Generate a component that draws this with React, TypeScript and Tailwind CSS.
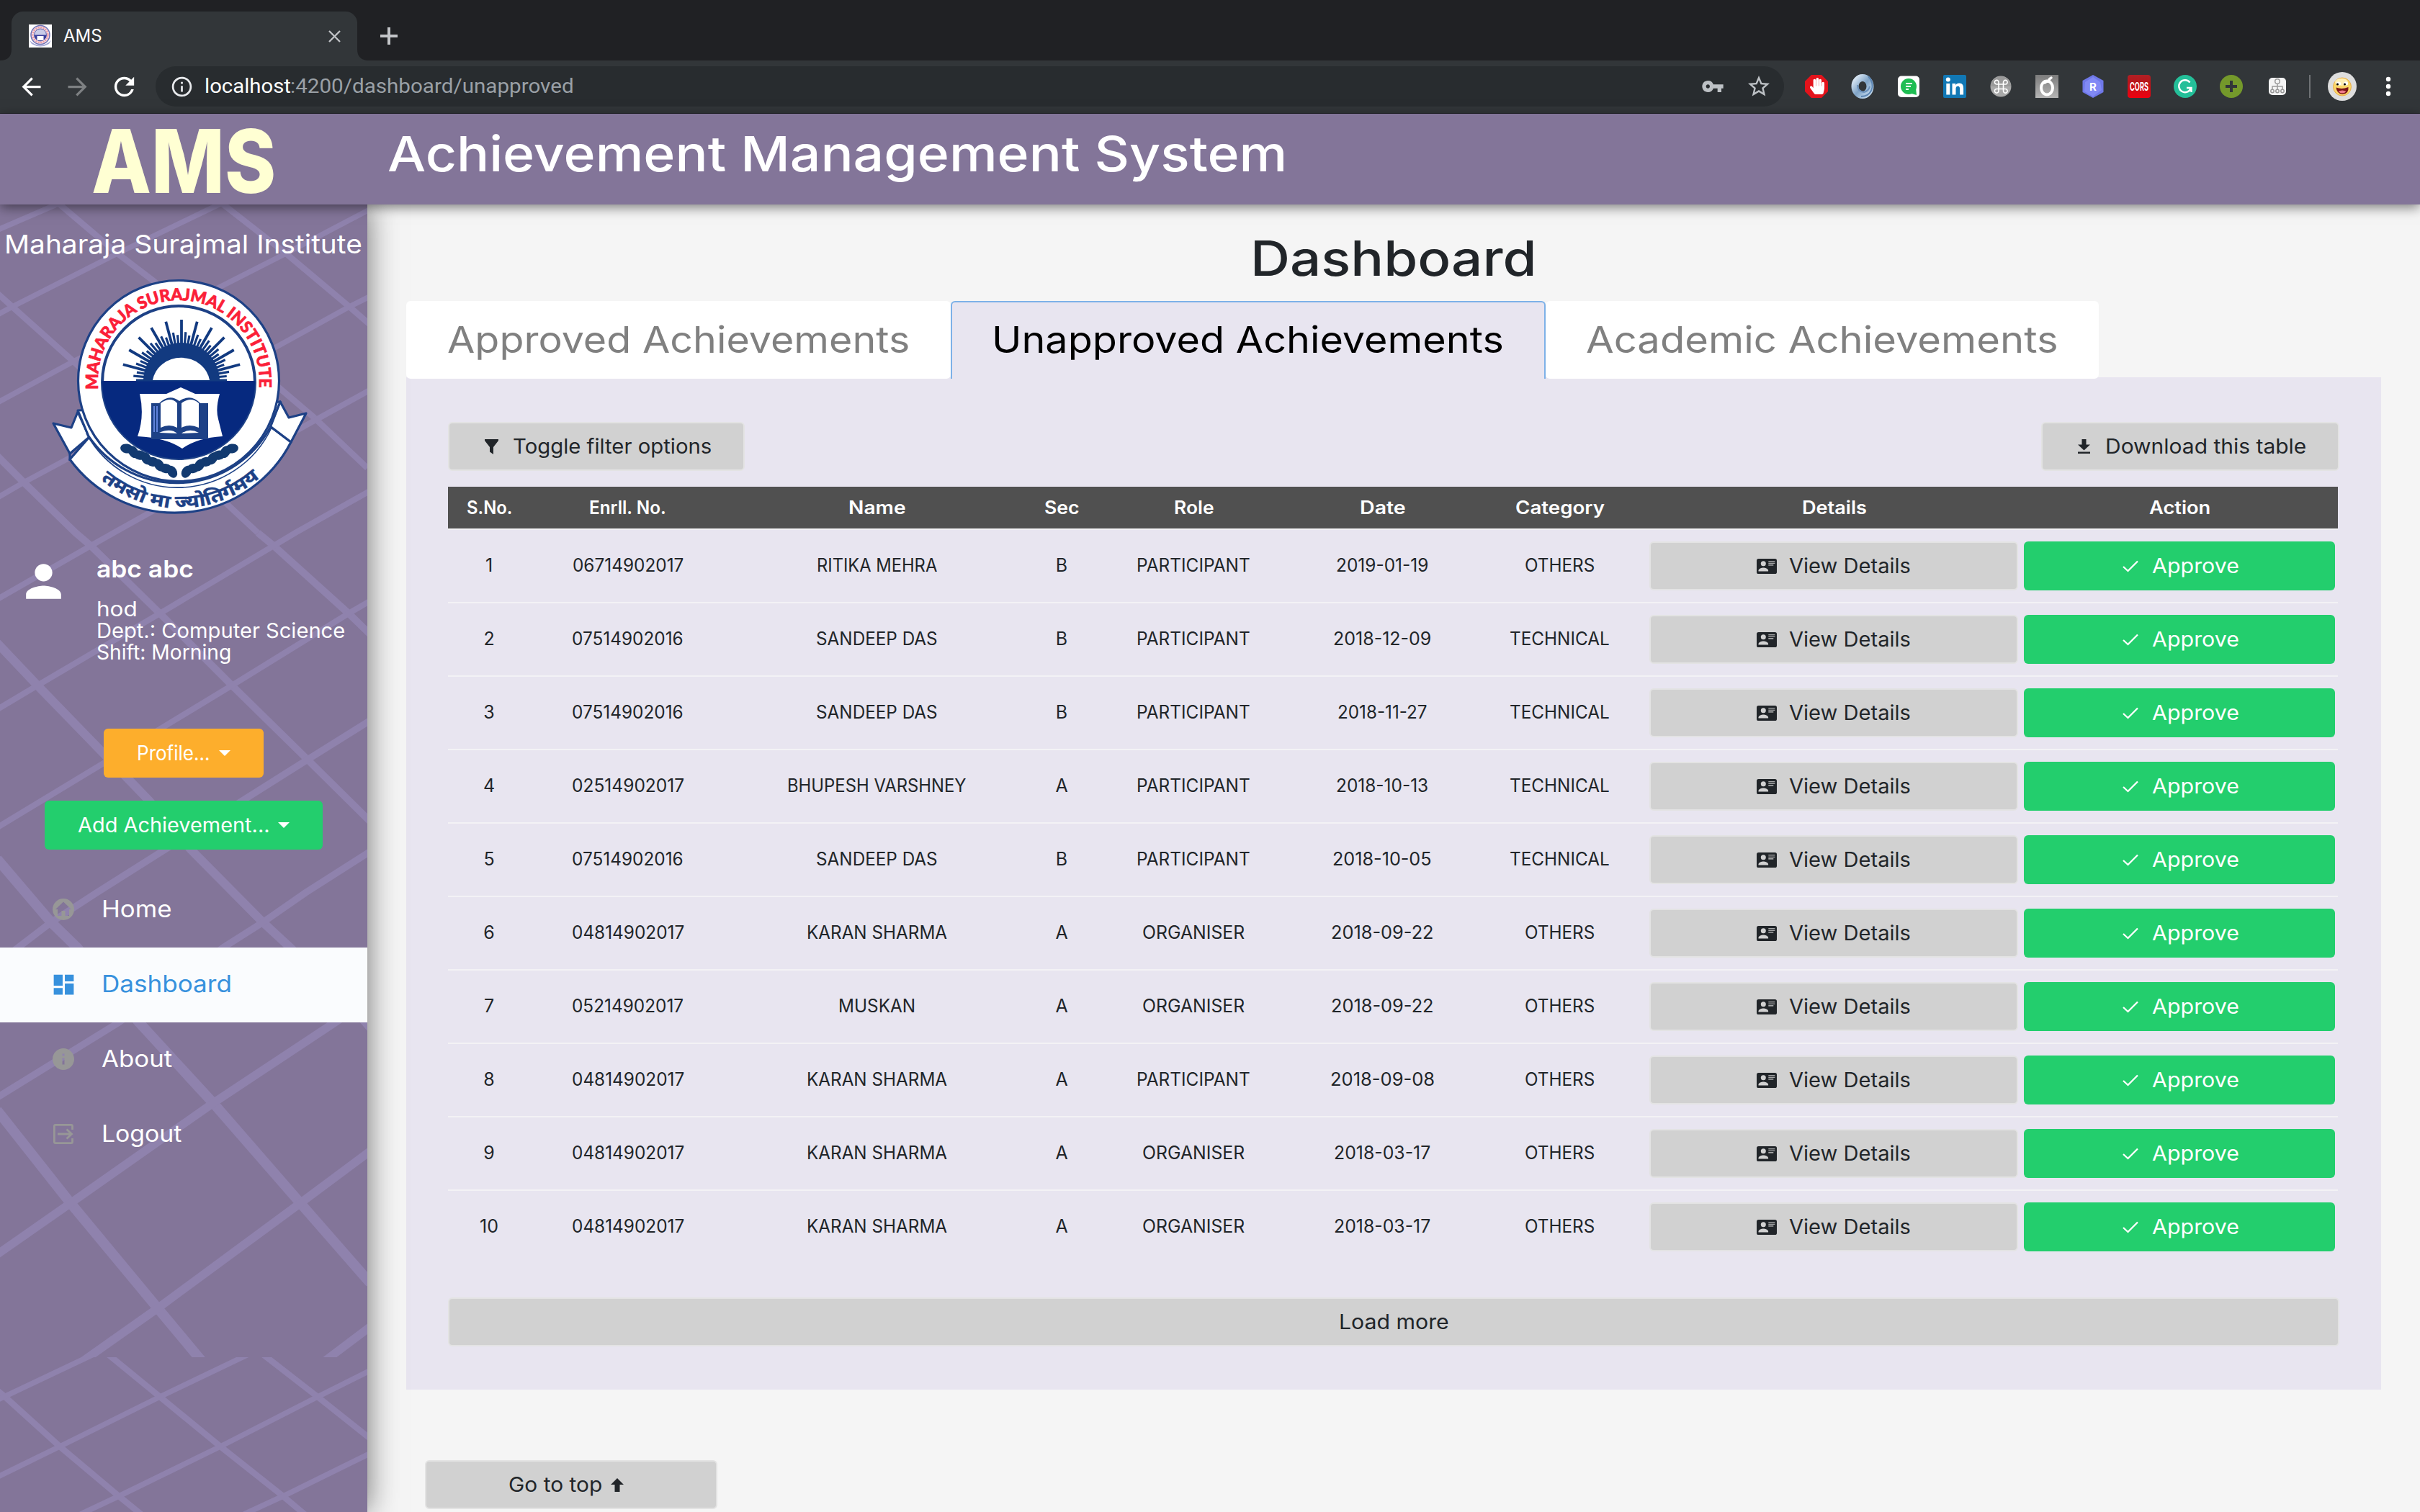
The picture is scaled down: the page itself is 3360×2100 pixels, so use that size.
import { useLayoutEffect, useRef, useState } from "react";
import type { ReactNode } from "react";
import { MdArrowBack, MdArrowForward, MdDashboard, MdInfo, MdOutlineInfo, MdPerson, MdRefresh, MdStarBorder, MdVpnKey } from "react-icons/md";
import { FaHandPaper } from "react-icons/fa";

/* Text widened or narrowed so that its letters span `w` pixels. */
function Fit({ w, children, className = "" }: { w: number; children: string; className?: string }) {
  const ref = useRef<HTMLSpanElement>(null);
  const [box, setBox] = useState({ width: w, scale: 1 });
  useLayoutEffect(() => {
    const el = ref.current;
    if (!el) return;
    const size = parseFloat(getComputedStyle(el).fontSize);
    const width = w + size * 0.12;
    setBox({ width, scale: width / el.offsetWidth });
  }, [w, children]);
  return (
    <span className={"inline-block whitespace-pre " + className} style={{ width: box.width }}>
      <span ref={ref} className="inline-block origin-left" style={{ transform: `scaleX(${box.scale})` }}>
        {children}
      </span>
    </span>
  );
}

const rows: { n: string; enr: string; ew: number; name: string; nw: number; sec: string; role: string; date: string; dw: number; cat: string }[] = [
  { n: "1", enr: "06714902017", ew: 151, name: "RITIKA MEHRA", nw: 164, sec: "B", role: "PARTICIPANT", date: "2019-01-19", dw: 125, cat: "OTHERS" },
  { n: "2", enr: "07514902016", ew: 152, name: "SANDEEP DAS", nw: 166, sec: "B", role: "PARTICIPANT", date: "2018-12-09", dw: 133, cat: "TECHNICAL" },
  { n: "3", enr: "07514902016", ew: 152, name: "SANDEEP DAS", nw: 166, sec: "B", role: "PARTICIPANT", date: "2018-11-27", dw: 122, cat: "TECHNICAL" },
  { n: "4", enr: "02514902017", ew: 153, name: "BHUPESH VARSHNEY", nw: 246, sec: "A", role: "PARTICIPANT", date: "2018-10-13", dw: 125, cat: "TECHNICAL" },
  { n: "5", enr: "07514902016", ew: 152, name: "SANDEEP DAS", nw: 166, sec: "B", role: "PARTICIPANT", date: "2018-10-05", dw: 135, cat: "TECHNICAL" },
  { n: "6", enr: "04814902017", ew: 153, name: "KARAN SHARMA", nw: 192, sec: "A", role: "ORGANISER", date: "2018-09-22", dw: 140, cat: "OTHERS" },
  { n: "7", enr: "05214902017", ew: 152, name: "MUSKAN", nw: 104, sec: "A", role: "ORGANISER", date: "2018-09-22", dw: 140, cat: "OTHERS" },
  { n: "8", enr: "04814902017", ew: 153, name: "KARAN SHARMA", nw: 192, sec: "A", role: "PARTICIPANT", date: "2018-09-08", dw: 142, cat: "OTHERS" },
  { n: "9", enr: "04814902017", ew: 153, name: "KARAN SHARMA", nw: 192, sec: "A", role: "ORGANISER", date: "2018-03-17", dw: 131, cat: "OTHERS" },
  { n: "10", enr: "04814902017", ew: 153, name: "KARAN SHARMA", nw: 192, sec: "A", role: "ORGANISER", date: "2018-03-17", dw: 131, cat: "OTHERS" },
];

const headers: [string, number][] = [
  ["S.No.", 60], ["Enrll. No.", 104], ["Name", 77], ["Sec", 46], ["Role", 53], ["Date", 61], ["Category", 121], ["Details", 87], ["Action", 82],
];

const grid = "grid grid-cols-[114px_270px_422px_92px_274px_250px_242px_520px_440px]";

function GreyButton({ children, className = "" }: { children: ReactNode; className?: string }) {
  return (
    <div className={"flex h-[68px] items-center rounded-[6px] border-2 border-[#e3e3e3] bg-[#d1d1d1] text-[28px] text-[#212529] " + className}>
      {children}
    </div>
  );
}

function CardIcon() {
  return (
    <svg width="28" height="21" viewBox="0 0 28 21">
      <rect width="28" height="21" rx="2.6" fill="#212529" />
      <circle cx="9.3" cy="6.8" r="3.5" fill="#d1d1d1" />
      <path d="M2.5 17.6v-1.2c0-2.4 4.5-3.8 6.8-3.8s6.8 1.4 6.8 3.8v1.2z" fill="#d1d1d1" />
      <path d="M16.3 3.8h9M16.3 6.3h9M16.3 8.9h7" stroke="#d1d1d1" strokeWidth="1.1" />
    </svg>
  );
}

function SidebarPattern() {
  return (
    <svg className="absolute inset-0" width="510" height="1816" viewBox="0 284 510 1816" fill="none" stroke="#8f82ad">
      <path strokeWidth="8.5" d="M77 279L83 284L163 352L213 390L435 579L510 650M304 279L310 284L397 352L485 426L514 451M-4 407L17 426L102 502L358 740" />
      <path strokeWidth="7.5" d="M-5 320L83 282M-5 438L17 426L163 352L310 281M-5 560L102 502L397 352L515 290M-5 692L33 670L387 480L485 426L515 411" />
      <path strokeWidth="10" d="M-4 633L33 670L105 740L126 758L222 852L322 952L427 1055L514 1141M358 740L380 758L484 852L514 881" />
      <path strokeWidth="8" d="M-5 833L126 758L165 736L435 585L515 541M-5 986L52 952L222 852L380 758L410 740L515 681M-5 1150L152 1055L322 952L484 852L515 834" />
      <path strokeWidth="12" d="M-4 893L52 952L152 1055L207 1112L265 1180L365 1281L403 1316L499 1410L520 1434" />
      <path strokeWidth="9.5" d="M-5 1339L71 1281L134 1240L427 1055L515 1000M-5 1525L165 1420L310 1316L365 1281L424 1240L515 1182" />
      <path strokeWidth="14" d="M-4 1193L71 1281L107 1316L193 1420L296 1532L417 1671L514 1782M-4 1542L98 1671L219 1817L284 1895" />
      <path strokeWidth="11.5" d="M-5 1743L98 1671L296 1532L465 1420L515 1386M110 1894L219 1817L417 1671L515 1598M442 1897L515 1842" />
      <rect x="0" y="1885" width="510" height="215" fill="#837599" stroke="none" />
      <svg x="0" y="1885" width="510" height="215" viewBox="0 1885 510 215">
        <path strokeWidth="8.5" d="M150 1881L222 1940L306 2009L393 2078L424 2104M365 1881L441 1940L514 1998M-4 1931L7 1940L83 2009L165 2078L197 2104" />
        <path strokeWidth="7.5" d="M-5 1945L130 1881M-5 2052L83 2009L222 1940L345 1881M112 2103L165 2078L306 2009L441 1940L515 1903M339 2103L393 2078L515 2018" />
      </svg>
    </svg>
  );
}

function Emblem() {
  const rays = Array.from({ length: 37 }, (_, i) => {
    const a = Math.PI * (i / 36);
    const long = i % 3 === 0 && i > 0 && i < 36;
    const r = long ? 84 : i % 3 === 1 ? 67 : 63;
    return { x: 253 - Math.cos(a) * r, y: 526 - Math.sin(a) * r, w: long ? 3.8 : 3.2 };
  });
  const leaves = Array.from({ length: 8 }, (_, i) => i);
  return (
    <svg className="ml-[69px] mt-[22px] block" width="360" height="340" viewBox="70 384 360 340">
      <g fill="#fff" stroke="#1d4186" strokeWidth="3.2" strokeLinejoin="round">
        <path d="M98 636A181 181 0 0 0 405 612L376 590A148 148 0 0 1 125 605Z" />
        <path d="M75 586L100 592L109 570L125 605L98 628Z" />
        <path d="M426 572L402 578L390 556L376 590L405 612Z" />
        <path d="M98 626V638" />
        <path d="M109 568L124 604A148 148 0 0 0 376 592L390 556Z" />
        <circle cx="249" cy="527" r="139.5" />
        <path d="M121 600A144 144 0 0 0 378 592" fill="none" strokeWidth="1.6" />
        <circle cx="249" cy="529" r="106" strokeWidth="4" />
      </g>
      <path d="M143 527H355A106 106 0 0 1 143 531Z" fill="#06297f" />
      <g stroke="#123a80">
        {rays.map((r, i) => (
          <line key={i} x1="253" y1="526" x2={r.x} y2={r.y} strokeWidth={r.w} />
        ))}
      </g>
      <path d="M200 527A53 53 0 0 1 306 527Z" fill="#123a80" />
      <path d="M213 526A40 37 0 0 1 292 526Z" fill="#fff" />
      <path d="M195 545H232L252 536L272 545H306Q300 566 304 580L310 604Q275 606 254 621Q232 606 192 604Q202 576 195 545Z" fill="#fff" />
      <path d="M211 558H222Q236 544 250 555Q266 544 279 558H290V608H211Z" fill="#1d4186" />
      <path d="M224 558Q238 548 247 558V592Q236 586 224 592ZM253 558Q266 548 277 558V592Q264 586 253 592ZM222 599Q238 592 247 600ZM253 600Q264 592 277 599Z" fill="#fff" />
      <path d="M215 562V598M219 562V598" stroke="#7fa0ff" strokeWidth="1.4" />
      <g fill="#123a70">
        {leaves.map((i) => (
          <g key={i}>
            <ellipse cx={177 + i * 9} cy={621 + i * 4.6} rx="9" ry="6.5" transform={`rotate(${i % 2 ? 60 : 10} ${177 + i * 9} ${621 + i * 4.6})`} />
            <ellipse cx={323 - i * 9} cy={621 + i * 4.6} rx="9" ry="6.5" transform={`rotate(${i % 2 ? -60 : -10} ${323 - i * 9} ${621 + i * 4.6})`} />
          </g>
        ))}
      </g>
      <path id="arc-top" d="M137 539V527A112 112 0 0 1 361 527V539" fill="none" />
      <path id="arc-bottom" d="M141 664A169 169 0 0 0 362 661" fill="none" />
      <text className="font-['Lato',sans-serif] font-black" fontSize="23" fill="#fb2038" stroke="#fb2038" strokeWidth=".7">
        <textPath href="#arc-top" textLength="373">MAHARAJA SURAJMAL INSTITUTE</textPath>
      </text>
      <text className="font-['Noto_Sans','Noto_Sans_Devanagari',sans-serif] font-bold" fontSize="25" fill="#1d4186" stroke="#1d4186" strokeWidth=".4">
        <textPath href="#arc-bottom" textLength="240" lengthAdjust="spacingAndGlyphs">तमसो मा ज्योतिर्गमय</textPath>
      </text>
    </svg>
  );
}

function Caret() {
  return <span className="mb-3 h-0 w-0 border-x-8 border-t-8 border-x-transparent border-t-white" />;
}

function NavItem({ icon, label, w, active = false }: { icon: ReactNode; label: string; w: number; active?: boolean }) {
  return (
    <div className={"flex h-[104px] items-center pb-[2px] text-[32px] " + (active ? "bg-[#fafcfe] text-[#3791dd]" : "text-white")}>
      <div className={"ml-[68px] flex w-10 justify-center " + (active ? "" : "text-[#979797]")}>{icon}</div>
      <Fit w={w} className="ml-[33px]">{label}</Fit>
    </div>
  );
}

function Extensions() {
  return (
    <svg width="676" height="44" viewBox="2500 98 676 44">
      <defs>
        <linearGradient id="ring" x1="0" y1="0" x2="1" y2="1">
          <stop offset="0" stopColor="#dbe8f5" /><stop offset=".5" stopColor="#7fa3c6" /><stop offset="1" stopColor="#c5dbee" />
        </linearGradient>
        <linearGradient id="grey" x1="0" y1="0" x2="0" y2="1">
          <stop offset="0" stopColor="#7c7c7c" /><stop offset="1" stopColor="#b5b5b5" />
        </linearGradient>
        <linearGradient id="cors" x1="0" y1="0" x2="0" y2="1">
          <stop offset="0" stopColor="#b02025" /><stop offset=".3" stopColor="#b8161b" /><stop offset="1" stopColor="#f00010" />
        </linearGradient>
      </defs>
      <path d="M2515 104h14l9 9v14l-9 9h-14l-9-9v-14z" fill="#e3131b" />
      <g transform="translate(2511.5 108)"><FaHandPaper size={23} color="#fff" /></g>
      <ellipse cx="2586" cy="120" rx="10.500" ry="12" fill="none" stroke="url(#ring)" strokeWidth="10" />
      <path d="M2594 106q9 10 4 20q-4 8-14 8" fill="none" stroke="#5d86b3" strokeWidth="2" />
      <path d="M2579 118q0 9 9 10q7-2 8-8" fill="none" stroke="#6b91bb" strokeWidth="2" />
      <rect x="2635" y="105.500" width="30" height="29.500" rx="5" fill="#fff" />
      <circle cx="2650" cy="120" r="11" fill="#1fbd53" />
      <path d="M2654 130l7 2-1-10z" fill="#1fbd53" />
      <path d="M2646 116h9M2646 120h7M2646 124h4" stroke="#fff" strokeWidth="2" />
      <rect x="2698" y="104" width="32" height="32" rx="2" fill="#1178b5" />
      <circle cx="2704.800" cy="110.500" r="3" fill="#fff" />
      <path d="M2702.300 116h5v15.500h-5zM2710.500 116h4.700v2.200c1-1.700 2.700-2.600 5-2.600 4.600 0 5.900 2.900 5.900 7v8.900h-5v-8c0-2-.4-3.800-2.600-3.800-2.300 0-3 1.700-3 3.800v8h-5z" fill="#fff" />
      <circle cx="2778" cy="120" r="14.500" fill="#a9a9a9" />
      <path d="M2764 120a14 14 0 0 1 28 0z" fill="#9a9a9a" />
      <path d="M2775 117h6.500v6.500h-6.500zM2775 117v-2.600a2.800 2.800 0 1 0-2.800 2.600zM2781.500 117h2.600a2.800 2.800 0 1 0-2.600-2.800zM2775 123.500h-2.600a2.800 2.800 0 1 0 2.600 2.800zM2781.500 123.500v2.600a2.800 2.800 0 1 0 2.800-2.600z" fill="none" stroke="#fff" strokeWidth="1.600" />
      <rect x="2826" y="104" width="32" height="32" fill="url(#grey)" />
      <ellipse cx="2842" cy="122" rx="8" ry="9.500" fill="none" stroke="#fff" strokeWidth="4" />
      <path d="M2839 115q2-2 6-2q-1-3 3-5" fill="none" stroke="#fff" strokeWidth="3.500" strokeLinecap="round" />
      <path d="M2906 104l14.500 8v16l-14.500 8-14.500-8v-16z" fill="#6f78e8" />
      <path d="M2906 107l10 7 2 11-12 9-12-7 1-13z" fill="#8189f5" />
      <text x="2906" y="125.500" textAnchor="middle" fontSize="15" fontWeight="bold" fill="#fff">R</text>
      <rect x="2954" y="104" width="32" height="32" rx="4" fill="url(#cors)" />
      <text x="2957" y="125.500" textLength="26" lengthAdjust="spacingAndGlyphs" fontSize="15.500" fontWeight="bold" fill="#fff">CORS</text>
      <circle cx="3034" cy="120" r="16" fill="#24bf99" />
      <path d="M3040.500 114.500a8.500 8.500 0 1 0 1.300 8M3036 122h6.500v6" fill="none" stroke="#fff" strokeWidth="2.400" />
      <circle cx="3098" cy="120" r="16" fill="#74992b" />
      <path d="M3098 112v16M3090 120h16" stroke="#323639" strokeWidth="4" />
      <rect x="3150" y="108" width="24" height="24" rx="5" fill="#f4f4f4" />
      <g fill="none" stroke="#999" strokeWidth="1.500">
        <circle cx="3162" cy="113" r="3.300" /><path d="M3162 116v8M3155 124v-4h14v4" />
        <circle cx="3155" cy="126.500" r="2.200" /><circle cx="3162" cy="126.500" r="2.200" /><circle cx="3169" cy="126.500" r="2.200" />
      </g>
    </svg>
  );
}

function Browser() {
  return (
    <div className="h-[158px] shrink-0 bg-[#323639] border-b border-[#202326]">
      <div className="flex h-[84px] items-end bg-[#202124]">
        <svg className="shrink-0" width="16" height="16"><path d="M16 0V16H0Q16 16 16 0Z" fill="#323639" /></svg>
        <div className="flex h-[68px] w-[480px] items-center rounded-t-[16px] bg-[#323639] pl-6 pr-[23px]">
          <svg width="32" height="32" viewBox="0 0 32 32">
            <rect width="32" height="32" fill="#fff" />
            <circle cx="16" cy="14.500" r="13" fill="#f7e9ef" stroke="#6d70b5" strokeWidth="1.500" />
            <circle cx="16" cy="14.500" r="10.500" fill="none" stroke="#eba0aa" strokeWidth="2.500" strokeDasharray="2.500 1" />
            <circle cx="16" cy="14.500" r="8.500" fill="#c9cce8" stroke="#5b60ad" />
            <path d="M7.500 14.500h17a8.500 8.500 0 0 1-17 0z" fill="#3b3f9c" />
            <rect x="11.500" y="16" width="9" height="6" fill="#fff" />
            <path d="M1 22q15 14 30 0l-3 5q-12 7-24 0z" fill="#a3a6d6" />
          </svg>
          <Fit w={51} className="ml-4 text-[24px] text-white">AMS</Fit>
          <svg className="ml-auto" width="17" height="17" viewBox="0 0 17 17"><path d="M1 1L16 16M16 1L1 16" stroke="#c3c5c8" strokeWidth="2.300" /></svg>
        </div>
        <svg className="shrink-0" width="16" height="16"><path d="M0 0V16H16Q0 16 0 0Z" fill="#323639" /></svg>
        <svg className="mb-[21px] ml-4" width="24" height="26" viewBox="0 0 24 26"><path d="M12 1V25M0 13H24" stroke="#c3c5c8" strokeWidth="4" /></svg>
      </div>
      <div className="flex h-[72px] items-center">
        <MdArrowBack className="ml-[24px]" size={39} color="#fff" />
        <MdArrowForward className="ml-[25px]" size={39} color="#7e8183" />
        <MdRefresh className="ml-[25px]" size={41} color="#fff" />
        <div className="ml-[23px] flex h-14 w-[2261px] items-center rounded-full bg-[#282c2f]">
          <MdOutlineInfo className="ml-[20px]" size={33} color="#e8eaed" />
          <Fit w={116} className="ml-[15px] text-[28px] text-white font-['Roboto',sans-serif]">localhost</Fit>
          <Fit w={390} className="text-[28px] text-[#9aa0a6] font-['Roboto',sans-serif]">:4200/dashboard/unapproved</Fit>
          <MdVpnKey className="ml-auto" size={32} color="#bdc1c5" />
          <MdStarBorder className="ml-[30px] mr-[17px]" size={36} color="#bdc1c5" />
        </div>
        <div className="ml-[23px]"><Extensions /></div>
        <div className="ml-[30px] h-8 w-[2px] bg-[#6f7275]" />
        <svg className="ml-6" width="40" height="40" viewBox="0 0 40 40">
          <circle cx="20" cy="20" r="20" fill="#dedede" />
          <circle cx="20" cy="20.500" r="12.500" fill="#fbd769" stroke="#e8a23a" strokeWidth=".8" />
          <ellipse cx="19" cy="14" rx="9" ry="5" fill="#fff0b5" />
          <ellipse cx="15" cy="16" rx="3.200" ry="2.600" fill="#fff" /><ellipse cx="25" cy="16" rx="3.200" ry="2.600" fill="#fff" />
          <circle cx="13.500" cy="17" r="1.500" /><circle cx="23.500" cy="17" r="1.500" />
          <path d="M11.500 21.500q8 3 17-.5q1 9-8 10q-8-.5-9-9.500z" fill="#7c1416" />
          <path d="M14.500 27q6-3 11 0q-5 5-11 0z" fill="#f07c8c" />
        </svg>
        <svg className="ml-[40px]" width="8" height="28" viewBox="0 0 8 28" fill="#fff"><circle cx="4" cy="4" r="3.200" /><circle cx="4" cy="14" r="3.200" /><circle cx="4" cy="24" r="3.200" /></svg>
      </div>
    </div>
  );
}

export default function App() {
  return (
    <div className="flex h-[2100px] w-[3360px] flex-col overflow-hidden bg-[#f5f5f5] font-['Inter',sans-serif] text-[#212529]">
      <Browser />
      <header className="relative z-20 flex h-[126px] shrink-0 items-center bg-[#837599] shadow-[0_4px_16px_rgba(0,0,0,0.5)]">
        <div className="flex h-[126px] w-[510px] items-center justify-center overflow-visible pt-[5px]">
          <Fit w={242} className="text-[122px] font-extrabold leading-[121px] text-[#ffffd3]">AMS</Fit>
        </div>
        <Fit w={1241} className="mb-[16px] ml-[28px] text-[68px] font-medium leading-[80px] text-white">Achievement Management System</Fit>
      </header>

      <div className="flex min-h-0 flex-1">
        <aside className="relative z-10 w-[510px] shrink-0 bg-[#837599] text-white shadow-[0_0_40px_rgba(0,0,0,0.55)]">
          <SidebarPattern />
          <div className="relative flex flex-col pt-[30px]">
            <Fit w={492} className="ml-[6px] self-start text-[36px] leading-[50px]">Maharaja Surajmal Institute</Fit>
            <Emblem />
            <div className="mt-[44px] flex h-[151px] items-start">
              <MdPerson className="ml-6 mt-[1px]" size={73} />
              <div className="ml-[37px] flex flex-col items-start">
                <Fit w={131} className="text-[33px] font-semibold leading-10">abc abc</Fit>
                <div className="mt-[21px] flex flex-col items-start text-[28px] leading-[30px]">
                  <Fit w={54}>hod</Fit>
                  <Fit w={342}>Dept.: Computer Science</Fit>
                  <Fit w={184}>Shift: Morning</Fit>
                </div>
              </div>
            </div>
            <div className="mt-[91px] flex flex-col items-center gap-8 text-[28px]">
              <div className="flex h-[68px] w-[222px] items-center justify-center gap-3 rounded-[6px] bg-[#fdae2c]">
                <Fit w={98}>Profile...</Fit><span className="mt-3 flex"><Caret /></span>
              </div>
              <div className="flex h-[68px] w-[386px] items-center justify-center gap-3 rounded-[6px] bg-[#23ce6d]">
                <Fit w={263}>Add Achievement...</Fit><span className="mt-3 flex"><Caret /></span>
              </div>
            </div>
            <nav className="mt-8">
              <NavItem label="Home" w={94} icon={
                <svg width="30" height="30" viewBox="0 0 30 30"><path fillRule="evenodd" fill="currentColor" d="M15 0a15 15 0 1 0 0 30a15 15 0 1 0 0-30zM15 4.500L26 15H23V24H17.500V17H12.500V24H7V15H4Z" /></svg>
              } />
              <NavItem label="Dashboard" w={177} active icon={<MdDashboard className="shrink-0" size={37} />} />
              <NavItem label="About" w={94} icon={<MdInfo className="shrink-0" size={36} />} />
              <NavItem label="Logout" w={107} icon={
                <svg width="28" height="28" viewBox="0 0 28 28" fill="none" stroke="currentColor" strokeWidth="2.800">
                  <path d="M26.500 8V3Q26.500 1.400 25 1.400H3Q1.400 1.400 1.400 3V25Q1.400 26.600 3 26.600H25Q26.500 26.600 26.500 25V20M6 14H25M18.500 7.500L25.500 14L18.500 20.500" />
                </svg>
              } />
            </nav>
          </div>
        </aside>

        <main className="flex w-[2850px] flex-col pl-[54px]">
          <h1 className="flex h-[134px] w-[2742px] shrink-0 items-center justify-center pt-4 text-[67px] font-medium">
            <Fit w={389}>Dashboard</Fit>
          </h1>
          <div className="relative z-10 flex h-[108px] shrink-0 text-[51px] text-[#808080]">
            <div className="flex w-[756px] items-center justify-center rounded-[6px] bg-white"><Fit w={636}>Approved Achievements</Fit></div>
            <div className="flex w-[826px] items-center justify-center rounded-t-[6px] border-2 border-b-0 border-[#7db1e8] bg-[#e8e5f0] pb-[2px] text-black"><Fit w={705}>Unapproved Achievements</Fit></div>
            <div className="flex w-[768px] items-center justify-center rounded-[6px] bg-white"><Fit w={650}>Academic Achievements</Fit></div>
          </div>
          <section className="-mt-[2px] flex h-[1406px] w-[2742px] shrink-0 flex-col bg-[#e8e5f0] pl-[58px] pr-[60px] pt-[62px]">
            <div className="flex justify-between">
              <GreyButton className="w-[412px] pl-[49px]">
                <svg width="19" height="21" viewBox="0 0 19 21"><path d="M0 0H19V2L12 11V21L7 17.500V11L0 2Z" fill="#212529" /></svg>
                <Fit w={273} className="ml-5">Toggle filter options</Fit>
              </GreyButton>
              <GreyButton className="-mr-[2px] w-[414px] pl-[49px]">
                <svg width="17" height="20" viewBox="0 0 17 20"><path d="M5.500 0H11.500V7.500H17L8.500 15.500L0 7.500H5.500ZM0 17.500H17V20H0Z" fill="#212529" /></svg>
                <Fit w={276} className="ml-[21px]">Download this table</Fit>
              </GreyButton>
            </div>
            <div className="mt-[22px] flex flex-col text-[25px]">
              <div className={grid + " h-[58px] items-center bg-[#505050] font-semibold text-white"}>
                {headers.map(([h, w]) => (
                  <div key={h} className="flex justify-center pl-[1px] pt-[1px]"><Fit w={w}>{h}</Fit></div>
                ))}
              </div>
              {rows.map((r) => (
                <div key={r.n} className={grid + " h-[102px] items-center border-t-2 border-[#f3f2f5]"}>
                  <div className="flex justify-center">{r.n}</div>
                  <div className="flex justify-center pl-[1px]"><Fit w={r.ew}>{r.enr}</Fit></div>
                  <div className="flex justify-center"><Fit w={r.nw}>{r.name}</Fit></div>
                  <div className="flex justify-center">{r.sec}</div>
                  <div className="flex justify-center"><Fit w={r.role === "ORGANISER" ? 139 : 155}>{r.role}</Fit></div>
                  <div className="flex justify-center"><Fit w={r.dw}>{r.date}</Fit></div>
                  <div className="flex justify-center"><Fit w={r.cat === "OTHERS" ? 94 : 136}>{r.cat}</Fit></div>
                  <div className="px-1">
                    <GreyButton className="justify-center gap-[17px]"><CardIcon /><Fit w={166}>View Details</Fit></GreyButton>
                  </div>
                  <div className="pl-1 pr-1">
                    <div className="flex h-[68px] items-center justify-center gap-[19px] rounded-[6px] bg-[#23ce6d] pl-[3px] text-[28px] text-white">
                      <svg width="22" height="17" viewBox="0 0 22 17"><path d="M1 9L7.500 15L21 1.500" fill="none" stroke="#fff" strokeWidth="2.300" /></svg>
                      <Fit w={117}>Approve</Fit>
                    </div>
                  </div>
                </div>
              ))}
            </div>
            <GreyButton className="-mr-[2px] mt-12 shrink-0 justify-center"><Fit w={149}>Load more</Fit></GreyButton>
          </section>
          <GreyButton className="ml-[26px] mt-[98px] w-[406px] shrink-0 justify-center gap-[11px] pr-[14px]">
            <Fit w={127}>Go to top</Fit>
            <svg width="18" height="19" viewBox="0 0 18 19"><path d="M9 0L18 9H12.500V19H5.500V9H0Z" fill="#212529" /></svg>
          </GreyButton>
        </main>
      </div>
    </div>
  );
}
